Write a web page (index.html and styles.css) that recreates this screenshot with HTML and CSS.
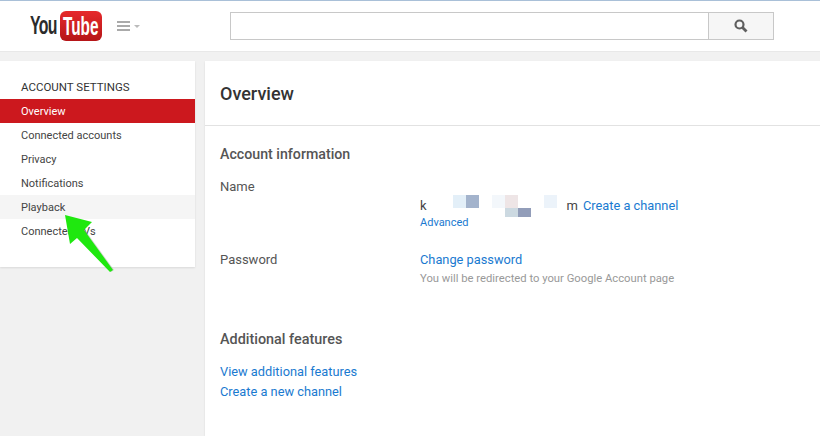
FILE: index.html
```html
<!DOCTYPE html>
<html lang="en">
<head>
    <meta charset="UTF-8">
    <title>Account settings - YouTube</title>
    <link rel="stylesheet" href="styles.css">
</head>
<body>
    <header class="masthead">
        <div class="logo">
            <span class="logo-you">You</span>
            <div class="logo-box"><span class="logo-tube">Tube</span></div>
        </div>
        <div class="guide-btn">
            <svg width="24" height="12" viewBox="0 0 24 12">
                <path d="M0 1h13v2H0zM0 5h13v2H0zM0 9h13v2H0z" fill="#aaa"/>
                <path d="M17 5h6l-3 3z" fill="#bbb"/>
            </svg>
        </div>
        <div class="search">
            <div class="search-input"></div>
            <div class="search-btn">
                <svg width="14" height="14" viewBox="0 0 14 14">
                    <circle cx="5.5" cy="5.5" r="4" fill="none" stroke="#5f5f5f" stroke-width="2.2"/>
                    <path d="M8.5 8.5L12.5 12.5" stroke="#5f5f5f" stroke-width="2.8"/>
                </svg>
            </div>
        </div>
    </header>

    <div class="page">
        <nav class="sidebar">
            <h3>ACCOUNT SETTINGS</h3>
            <a class="nav-item active">Overview</a>
            <a class="nav-item">Connected accounts</a>
            <a class="nav-item">Privacy</a>
            <a class="nav-item">Notifications</a>
            <a class="nav-item hover">Playback</a>
            <a class="nav-item">Connected TVs</a>
        </nav>

        <main class="content">
            <h1>Overview</h1>
            <section class="info">
                <h2>Account information</h2>
                <div class="row row-name">
                    <div class="label">Name</div>
                    <div class="value">
                        <div class="name-line"><span class="name-text">k</span><span class="name-gap"></span><span class="name-text">m</span><a class="link">Create a channel</a></div>
                        <a class="link small">Advanced</a>
                    </div>
                </div>
                <div class="row row-password">
                    <div class="label">Password</div>
                    <div class="value">
                        <a class="link block-link">Change password</a>
                        <p class="hint">You will be redirected to your Google Account page</p>
                    </div>
                </div>
                <h2 class="additional">Additional features</h2>
                <a class="link block">View additional features</a>
                <a class="link block">Create a new channel</a>
            </section>
        </main>
    </div>

    <!-- pixelated name blur -->
    <span class="px" style="left:453px;top:195px;width:13px;height:13px;background:#e3eff8"></span>
    <span class="px" style="left:466px;top:195px;width:13px;height:13px;background:#a3b3cc"></span>
    <span class="px" style="left:492px;top:195px;width:13px;height:13px;background:#f3f7fb"></span>
    <span class="px" style="left:505px;top:195px;width:13px;height:13px;background:#eee5e6"></span>
    <span class="px" style="left:505px;top:208px;width:13px;height:9px;background:#ccd9e1"></span>
    <span class="px" style="left:518px;top:208px;width:13px;height:9px;background:#929db9"></span>
    <span class="px" style="left:544px;top:195px;width:13px;height:13px;background:#ecf3fa"></span>

    <svg class="arrow" width="52" height="64" viewBox="0 0 52 64">
        <path d="M47 59L50 57L21 17L18 19Z" fill="#9aa796" opacity=".5"/>
        <path d="M1 2L28 9L20 17L49 57L46 59L13 25L6 31Z" fill="#1fe80f"/>
    </svg>
</body>
</html>
```

FILE: styles.css
```css
body {
    margin: 0;
    height: 436px;
    overflow: hidden;
    background-color: #f1f1f1;
    font-family: Roboto, Arial, sans-serif;
    color: #333;
}

.masthead {
    height: 50px;
    display: flex;
    align-items: center;
    background-color: #fff;
    border-top: 1px solid #a9c0d8;
    border-bottom: 1px solid #e8e8e8;
}

.logo {
    width: 72px;
    margin-left: 30px;
    display: flex;
    align-items: center;
    justify-content: space-between;
    font-family: "Liberation Sans", Arial, sans-serif;
}

.logo-you {
    width: 28px;
    font-size: 22px;
    font-weight: bold;
    letter-spacing: -1px;
    color: #2b2b2b;
    transform: scale(0.72, 1.2);
    transform-origin: left center;
}

.logo-box {
    width: 42px;
    height: 30px;
    display: flex;
    align-items: center;
    justify-content: center;
    border-radius: 6px;
    background: linear-gradient(#e62a2c, #b51518);
}

.logo-tube {
    font-size: 24px;
    font-weight: bold;
    color: #fff;
    transform: scale(0.64, 1.1);
}

.guide-btn {
    margin-left: 15px;
    width: 24px;
    height: 12px;
}

.guide-btn svg {
    display: block;
}

.search {
    margin-left: 89px;
    width: 544px;
    height: 28px;
    display: flex;
}

.search-input {
    flex: 1;
    background-color: #fff;
    border: 1px solid #c8c8c8;
    border-right: none;
}

.search-btn {
    width: 64px;
    display: flex;
    align-items: center;
    justify-content: center;
    background-color: #f6f6f6;
    border: 1px solid #c8c8c8;
}

.page {
    display: flex;
    align-items: flex-start;
    gap: 10px;
    margin-top: 9px;
}

.sidebar {
    width: 195px;
    height: 206px;
    background-color: #fff;
    box-shadow: 0 1px 2px rgba(0, 0, 0, 0.1);
}

.sidebar h3 {
    margin: 0;
    padding: 18px 0 0 21px;
    height: 20px;
    font-size: 11.5px;
    line-height: 16px;
    font-weight: 400;
    color: #333;
}

.nav-item {
    display: block;
    height: 24px;
    line-height: 26px;
    padding-left: 21px;
    font-size: 11px;
    color: #444;
}

.nav-item.active {
    background-color: #cc181e;
    color: #fff;
}

.nav-item.hover {
    background-color: #f5f5f5;
}

.content {
    width: 615px;
    height: 375px;
    background-color: #fff;
    box-shadow: 0 1px 2px rgba(0, 0, 0, 0.1);
}

.content h1 {
    margin: 0;
    height: 64px;
    padding-left: 15px;
    line-height: 65px;
    font-size: 18px;
    font-weight: 500;
    color: #333;
    border-bottom: 1px solid #e2e2e2;
}

.info {
    padding: 19px 15px 0;
}

.info h2 {
    margin: 0;
    font-size: 14.2px;
    line-height: 18px;
    font-weight: 500;
    color: #555;
}

.row {
    display: flex;
}

.label {
    width: 200px;
    font-size: 13px;
    line-height: 18px;
    color: #555;
}

.row-name {
    margin-top: 15px;
    height: 73px;
}

.row-name .value {
    padding-top: 19px;
}

.row-password {
    height: 80px;
}

.name-line {
    display: flex;
    font-size: 13px;
    line-height: 18px;
}

.name-text {
    color: #444;
}

.name-gap {
    width: 140px;
}

.name-line .link {
    margin-left: 5px;
}

.link {
    color: #1a7ad0;
    font-size: 12.8px;
    line-height: 18px;
}

.link.small {
    display: block;
    font-size: 11px;
    line-height: 16px;
}

.link.block {
    display: block;
    line-height: 20px;
}

.link.block-link {
    display: block;
}

.hint {
    margin: 2px 0 0;
    font-size: 11.25px;
    line-height: 16px;
    color: #999;
}

.info h2.additional {
    margin-bottom: 13px;
    font-size: 14.4px;
}

.px {
    position: absolute;
}

.arrow {
    position: absolute;
    left: 64px;
    top: 213px;
}
```
